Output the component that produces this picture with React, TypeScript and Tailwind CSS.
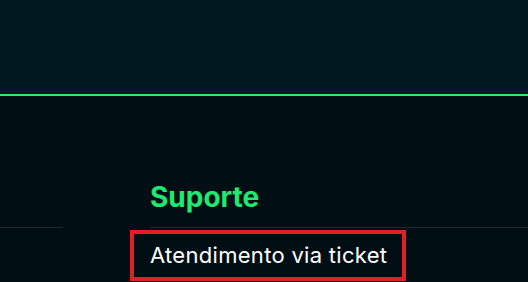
export default function App() {
  return (
    <div className="w-[528px] h-[282px] overflow-hidden bg-[#010f15] font-['Inter','Liberation_Sans',sans-serif]">
      <header className="h-[96px] bg-[#011820] border-b-2 border-[#2ee57a]" />
      <div className="flex gap-[87px] pt-[83px]">
        <div className="w-[63px] pt-[48px]">
          <div className="h-px bg-[#1d2b31]" />
        </div>
        <div className="flex-1">
          <h3 className="text-[28px] leading-[36px] font-bold text-[#1fe96e] pb-[12px] border-b border-[#1d2b31]">
            Suporte
          </h3>
          <a className="mt-[2px] -ml-[20px] flex items-center w-[276px] h-[51px] pl-[16px] border-4 border-[#e21f26] text-white text-[22px] tracking-[0.3px]">
            Atendimento via ticket
          </a>
        </div>
      </div>
    </div>
  )
}
